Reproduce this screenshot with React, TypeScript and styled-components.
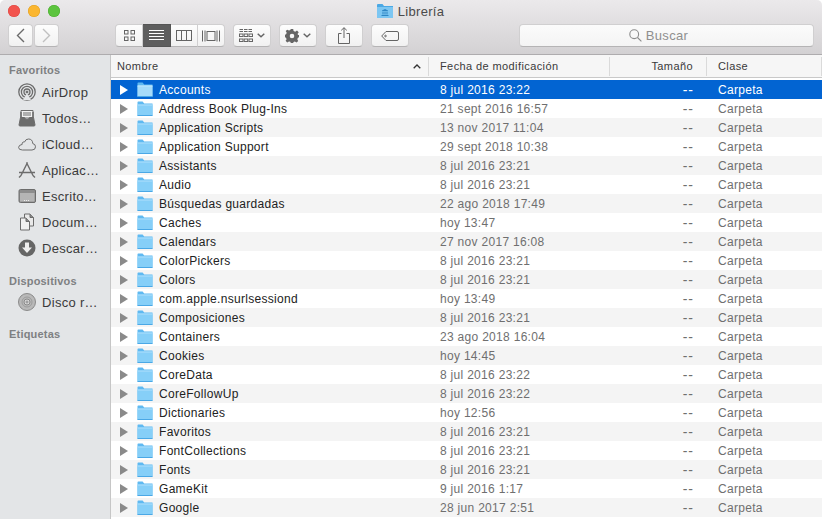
import React from 'react';
import styled, { createGlobalStyle } from 'styled-components';

const Global = createGlobalStyle`
  html, body {
    margin: 0;
    background: #fff;
  }
  body {
    font-family: "Liberation Sans", Arial, sans-serif;
  }
`;

const Window = styled.div`
  width: 822px;
  height: 519px;
  overflow: hidden;
  display: flex;
  flex-direction: column;
  border-radius: 5px 5px 0 0;
  background: #fff;
`;

const Chrome = styled.header`
  height: 54px;
  flex: none;
  background: linear-gradient(#ebe9eb, #d3d1d3);
  border-bottom: 1px solid #aeacae;
`;

const TitleBar = styled.div`
  height: 22px;
  display: grid;
  grid-template-columns: 1fr auto 1fr;
  align-items: center;
  padding: 0 8px 0 8px;
`;

const Lights = styled.div`
  display: flex;
  gap: 8px;
`;

const Light = styled.span<{ $c: string; $b: string }>`
  width: 12px;
  height: 12px;
  border-radius: 50%;
  background: ${(p) => p.$c};
  box-shadow: inset 0 0 0 0.5px ${(p) => p.$b};
`;

const Title = styled.div`
  display: flex;
  align-items: center;
  gap: 5px;
  font-size: 13px;
  letter-spacing: 0.3px;
  color: #4a4a4a;
  margin-right: 1px;
`;

const Toolbar = styled.div`
  height: 23px;
  margin-top: 2px;
  display: flex;
  padding: 0 8px;
`;

const Nav = styled.div`
  display: flex;
  gap: 1px;
  margin-right: 56px;
`;

const Segments = styled.div`
  display: flex;
  margin-right: 8px;
`;

const Btn = styled.button<{ $w: number; $on?: boolean; $seg?: 'l' | 'm' | 'r' }>`
  width: ${(p) => p.$w}px;
  height: 23px;
  padding: 0;
  display: flex;
  align-items: center;
  justify-content: center;
  gap: 4px;
  color: ${(p) => (p.$on ? '#fff' : '#646464')};
  background: ${(p) => (p.$on ? '#5e5e5e' : 'linear-gradient(#fdfdfd, #f1f1f1)')};
  border: 1px solid ${(p) => (p.$on ? '#555' : '#d0cfd0')};
  border-bottom-color: ${(p) => (p.$on ? '#555' : '#b5b4b5')};
  border-left-width: ${(p) => (p.$seg === 'm' || p.$seg === 'r' ? 0 : 1)}px;
  border-radius: ${(p) =>
    p.$seg === 'l' ? '4px 0 0 4px' : p.$seg === 'm' ? '0' : p.$seg === 'r' ? '0 4px 4px 0' : '4px'};
`;

const Gap = styled(Btn)`
  margin-right: 8px;
`;

const Search = styled.div`
  margin-left: auto;
  width: 295px;
  height: 23px;
  box-sizing: border-box;
  display: flex;
  align-items: center;
  justify-content: center;
  gap: 4px;
  padding-right: 16px;
  font-size: 13px;
  letter-spacing: 0.3px;
  color: #8f8f8f;
  background: linear-gradient(#fbfbfb, #f4f4f4);
  border: 1px solid #d0cfd0;
  border-bottom-color: #b5b4b5;
  border-radius: 4px;
`;

const Body = styled.div`
  flex: 1;
  min-height: 0;
  display: flex;
`;

const Sidebar = styled.aside`
  width: 110px;
  flex: none;
  box-sizing: content-box;
  background: #e3e5e7;
  border-right: 1px solid #c6c6c6;
  padding-top: 8px;
`;

const SideLabel = styled.div`
  height: 15px;
  line-height: 15px;
  padding-left: 9px;
  font-size: 11px;
  font-weight: bold;
  letter-spacing: 0.2px;
  color: #7e8082;
`;

const SideItem = styled.div`
  height: 26px;
  display: flex;
  align-items: center;
  gap: 6px;
  padding-left: 18px;
  font-size: 13px;
  letter-spacing: 0.3px;
  color: #3a3a3a;
  white-space: nowrap;
`;

const SideGroup = styled.div<{ $top: number; $bottom: number }>`
  margin-top: ${(p) => p.$top}px;
  margin-bottom: ${(p) => p.$bottom}px;
`;

const Content = styled.main`
  flex: 1;
  min-width: 0;
  display: flex;
  flex-direction: column;
`;

const Columns = '318px 181px 97px 1fr';

const Header = styled.div`
  height: 22px;
  flex: none;
  display: grid;
  grid-template-columns: ${Columns};
  align-items: center;
  background: #f6f6f6;
  border-bottom: 1px solid #c9c9c9;
  font-size: 11px;
  letter-spacing: 0.4px;
  color: #3a3a3a;
  margin-bottom: 2px;
`;

const HeadCell = styled.div<{ $right?: boolean; $pad: number }>`
  height: 19px;
  line-height: 19px;
  box-sizing: border-box;
  display: flex;
  align-items: center;
  justify-content: ${(p) => (p.$right ? 'flex-end' : 'space-between')};
  padding: ${(p) => (p.$right ? `0 13px 0 0` : `0 7px 0 ${p.$pad}px`)};
  border-right: 1px solid #dadada;
`;

const Row = styled.div<{ $bg: string; $sel: boolean }>`
  height: 19px;
  display: grid;
  grid-template-columns: ${Columns};
  align-items: center;
  background: ${(p) => p.$bg};
  font-size: 12px;
  letter-spacing: 0.3px;
  color: ${(p) => (p.$sel ? '#fff' : '#6f6f6f')};
`;

const NameCell = styled.div<{ $sel: boolean }>`
  display: flex;
  align-items: center;
  padding-left: 9px;
  color: ${(p) => (p.$sel ? '#fff' : '#222')};
  white-space: nowrap;
`;

const Disclosure = styled.svg`
  width: 8px;
  height: 10px;
  margin-right: 9px;
`;

const FolderIcon = styled.svg`
  width: 16px;
  height: 15px;
  margin-right: 6px;
`;

const DateCell = styled.div`
  padding-left: 11px;
`;

const SizeCell = styled.div`
  text-align: right;
  padding-right: 13px;
  font-size: 14px;
  letter-spacing: 1px;
`;

const KindCell = styled.div`
  padding-left: 11px;
`;

const rows: [string, string][] = [
  ['Accounts', '8 jul 2016 23:22'],
  ['Address Book Plug-Ins', '21 sept 2016 16:57'],
  ['Application Scripts', '13 nov 2017 11:04'],
  ['Application Support', '29 sept 2018 10:38'],
  ['Assistants', '8 jul 2016 23:21'],
  ['Audio', '8 jul 2016 23:21'],
  ['Búsquedas guardadas', '22 ago 2018 17:49'],
  ['Caches', 'hoy 13:47'],
  ['Calendars', '27 nov 2017 16:08'],
  ['ColorPickers', '8 jul 2016 23:21'],
  ['Colors', '8 jul 2016 23:21'],
  ['com.apple.nsurlsessiond', 'hoy 13:49'],
  ['Composiciones', '8 jul 2016 23:21'],
  ['Containers', '23 ago 2018 16:04'],
  ['Cookies', 'hoy 14:45'],
  ['CoreData', '8 jul 2016 23:22'],
  ['CoreFollowUp', '8 jul 2016 23:22'],
  ['Dictionaries', 'hoy 12:56'],
  ['Favoritos', '8 jul 2016 23:21'],
  ['FontCollections', '8 jul 2016 23:21'],
  ['Fonts', '8 jul 2016 23:21'],
  ['GameKit', '9 jul 2016 1:17'],
  ['Google', '28 jun 2017 2:51'],
];

const Folder = ({ sel }: { sel: boolean }) => (
  <FolderIcon viewBox="0 0 16 15">
    <path d="M0.5 14.5V1.2Q0.5 0.5 1.2 0.5H5.6L7.2 2.5H15.5V14.5Z" fill={sel ? '#5cb6f0' : '#5fb9f1'} />
    <rect x="0.5" y="3.5" width="15" height="11" rx="0.5" fill={sel ? '#a5dbfa' : '#86cff8'} />
    <rect x="0.5" y="3.5" width="15" height="1" fill={sel ? '#c4e8fc' : '#b0e0fb'} />
    <rect x="0.5" y="14" width="15" height="1" fill="#4aa8e6" />
  </FolderIcon>
);

const Triangle = ({ sel }: { sel: boolean }) => (
  <Disclosure viewBox="0 0 8 10">
    <path d="M0 0L8 5L0 10Z" fill={sel ? '#fff' : '#8a8a8a'} />
  </Disclosure>
);

const Ico = ({ w, h, children }: { w: number; h: number; children: React.ReactNode }) => (
  <svg width={w} height={h} viewBox={`0 0 ${w} ${h}`} fill="none" stroke="currentColor" strokeWidth="1">
    {children}
  </svg>
);

const Chevron = () => (
  <Ico w={8} h={5}>
    <path d="M0.7 0.7L4 3.8L7.3 0.7" strokeWidth="1.4" />
  </Ico>
);

const S = ({ children }: { children: React.ReactNode }) => (
  <svg width="18" height="18" viewBox="0 0 18 18" fill="none" stroke="#6c6c6c" strokeWidth="1" style={{ flex: 'none' }}>
    {children}
  </svg>
);

const sideIcons: Record<string, React.ReactNode> = {
  air: (
    <S>
      <circle cx="9" cy="9" r="8.2" strokeWidth="1.3" />
      <circle cx="9" cy="9" r="5.6" strokeWidth="1.3" />
      <circle cx="9" cy="9" r="3" strokeWidth="1.3" />
      <circle cx="9" cy="9" r="1" fill="#6c6c6c" />
      <path d="M5 17L9 10L13 17Z" fill="#e3e5e7" stroke="none" />
    </S>
  ),
  all: (
    <S>
      <path d="M3 1.5H15V9H3Z" fill="#f2f2f2" />
      <path d="M5 4H13M5 6H13" />
      <path d="M2.5 8.5H6.5Q7 10.5 9 10.5Q11 10.5 11.5 8.5H15.5L17 16Q17 17 16 17H2Q1 17 1 16Z" fill="#6c6c6c" />
      <path d="M3 3V9M15 3V9" strokeWidth="1.5" />
    </S>
  ),
  cloud: (
    <S>
      <path d="M4.5 15H14Q17.5 15 17.5 11.8Q17.5 9 14.8 8.6Q14.5 4 10.5 4Q7.5 4 6.5 7Q5 6.4 4.3 8Q4 9 4.2 9.4Q0.6 10 0.6 12.4Q0.6 15 4.5 15Z" />
    </S>
  ),
  apps: (
    <S>
      <path d="M9.5 1.5L3 14.5M8.5 1.5L15 14.5M1 11.5H17M1 16.5L3 14.5M17 16.5L15 14.5" strokeWidth="1.4" />
    </S>
  ),
  desk: (
    <S>
      <rect x="1" y="2.5" width="16.5" height="13" rx="1.5" fill="#8d8d8d" stroke="#6c6c6c" />
      <rect x="2" y="6" width="14.5" height="8.5" fill="#b5b5b5" stroke="none" />
      <path d="M6 13.5H12" stroke="#eee" strokeDasharray="1 1" />
    </S>
  ),
  docs: (
    <S>
      <path d="M6.5 1H12L15.5 4.5V13H6.5Z" fill="#e9e9e9" />
      <path d="M12 1V4.5H15.5" fill="#8a8a8a" />
      <path d="M2.5 5H8L11.5 8.5V17H2.5Z" fill="#f1f1f1" />
      <path d="M8 5V8.5H11.5" fill="#8a8a8a" />
    </S>
  ),
  down: (
    <S>
      <circle cx="9" cy="9" r="8.5" fill="#666" stroke="none" />
      <path d="M7 3.5H11V8.5H14L9 14L4 8.5H7Z" fill="#eee" stroke="none" />
    </S>
  ),
  disc: (
    <S>
      <circle cx="9" cy="9" r="8.5" fill="#b9b9b9" stroke="#8a8a8a" />
      <circle cx="9" cy="9" r="5" stroke="#9c9c9c" />
      <circle cx="9" cy="9" r="3" fill="#d8d8d8" stroke="#8a8a8a" />
      <circle cx="9" cy="9" r="1" fill="#e3e5e7" stroke="#8a8a8a" />
    </S>
  ),
};

const favorites: [keyof typeof sideIcons, string][] = [
  ['air', 'AirDrop'],
  ['all', 'Todos…'],
  ['cloud', 'iCloud…'],
  ['apps', 'Aplicac…'],
  ['desk', 'Escrito…'],
  ['docs', 'Docum…'],
  ['down', 'Descar…'],
];

export default function App() {
  return (
    <Window>
      <Global />
      <Chrome>
        <TitleBar>
          <Lights>
            <Light $c="#f2544e" $b="#dd4540" />
            <Light $c="#fbb630" $b="#e09e20" />
            <Light $c="#5cc43e" $b="#4aab2f" />
          </Lights>
          <Title>
            <svg width="16" height="14" viewBox="0 0 16 14">
              <path d="M0 14V1Q0 0 1 0H5.5L7 2H16V14Z" fill="#4ba8e4" />
              <rect x="0" y="3" width="16" height="11" fill="#7cc6f2" />
              <path d="M5 6.5L8 5L11 6.5V7H5ZM5.5 7.5H6.5V10.5H5.5ZM7.5 7.5H8.5V10.5H7.5ZM9.5 7.5H10.5V10.5H9.5ZM4.5 11H11.5V12H4.5Z" fill="#2e86c4" />
            </svg>
            Librería
          </Title>
        </TitleBar>
        <Toolbar>
          <Nav>
            <Btn $w={25}>
              <Ico w={9} h={15}>
                <path d="M8 1L1.5 7.5L8 14" strokeWidth="1.4" stroke="#6a6a6a" />
              </Ico>
            </Btn>
            <Btn $w={25}>
              <Ico w={9} h={15}>
                <path d="M1 1L7.5 7.5L1 14" strokeWidth="1.4" stroke="#c0c0c0" />
              </Ico>
            </Btn>
          </Nav>
          <Segments>
            <Btn $w={28} $seg="l">
              <Ico w={11} h={11}>
                <rect x="0.5" y="0.5" width="3.5" height="3.5" />
                <rect x="7" y="0.5" width="3.5" height="3.5" />
                <rect x="0.5" y="7" width="3.5" height="3.5" />
                <rect x="7" y="7" width="3.5" height="3.5" />
              </Ico>
            </Btn>
            <Btn $w={28} $seg="m" $on>
              <Ico w={15} h={11}>
                <path d="M0 0.5H15M0 3.5H15M0 6.5H15M0 9.5H15" />
              </Ico>
            </Btn>
            <Btn $w={27} $seg="m">
              <Ico w={16} h={11}>
                <rect x="0.5" y="0.5" width="15" height="10" />
                <path d="M5.5 0.5V10.5M10.5 0.5V10.5" />
              </Ico>
            </Btn>
            <Btn $w={27} $seg="r">
              <Ico w={18} h={12}>
                <rect x="5" y="1.5" width="8" height="9" />
                <path d="M0.5 0.5V11.5M3 0.5V11.5M15 0.5V11.5M17.5 0.5V11.5" />
              </Ico>
            </Btn>
          </Segments>
          <Gap $w={38}>
            <Ico w={14} h={13}>
              <path d="M0.5 0.5H13.5M0.5 2.5H13.5" strokeDasharray="3.5 1" />
              <rect x="0.5" y="5" width="3.5" height="2.5" />
              <rect x="5.2" y="5" width="3.5" height="2.5" />
              <rect x="10" y="5" width="3.5" height="2.5" />
              <rect x="0.5" y="10" width="3.5" height="2.5" />
              <rect x="5.2" y="10" width="3.5" height="2.5" />
              <rect x="10" y="10" width="3.5" height="2.5" />
            </Ico>
            <Chevron />
          </Gap>
          <Gap $w={38}>
            <svg width="14" height="14" viewBox="0 0 14 14">
              <path
                d="M5.8 0H8.2L8.6 2L10.2 2.7L12 1.6L13.7 3.3L12.5 5L13.2 6L14 6V8.2L12.9 8.8L12.3 10.3L13.2 12L11.6 13.6L9.8 12.5L8.5 13L8.2 14H5.8L5.3 12.8L4 12.4L2.2 13.5L0.6 11.8L1.6 10.2L1 8.7L0 8.2V5.8L1.1 5.2L1.7 3.8L0.7 2.1L2.2 0.7L4 1.6L5.3 1.1Z M7 4.7A2.3 2.3 0 1 0 7 9.3A2.3 2.3 0 1 0 7 4.7Z"
                fill="#666"
                fillRule="evenodd"
              />
            </svg>
            <Chevron />
          </Gap>
          <Gap $w={38}>
            <Ico w={12} h={17}>
              <path d="M3.5 6.5H0.5V16.5H11.5V6.5H8.5" />
              <path d="M6 11V0.8M3.2 3.4L6 0.7L8.8 3.4" />
            </Ico>
          </Gap>
          <Gap $w={38}>
            <Ico w={18} h={10}>
              <path d="M5 0.5H16Q17.5 0.5 17.5 2V8Q17.5 9.5 16 9.5H5L0.7 5Z" />
              <circle cx="4.5" cy="5" r="0.8" />
            </Ico>
          </Gap>
          <Search>
            <svg width="13" height="13" viewBox="0 0 13 13" fill="none" stroke="#8c8c8c" strokeWidth="1.1">
              <circle cx="5.2" cy="5.2" r="4.4" />
              <path d="M8.5 8.5L12.4 12.4" />
            </svg>
            Buscar
          </Search>
        </Toolbar>
      </Chrome>
      <Body>
        <Sidebar>
          <SideLabel>Favoritos</SideLabel>
          <SideGroup $top={1} $bottom={13}>
            {favorites.map(([k, t]) => (
              <SideItem key={t}>
                {sideIcons[k]}
                {t}
              </SideItem>
            ))}
          </SideGroup>
          <SideLabel>Dispositivos</SideLabel>
          <SideGroup $top={0} $bottom={12}>
            <SideItem>
              {sideIcons.disc}
              Disco r…
            </SideItem>
          </SideGroup>
          <SideLabel>Etiquetas</SideLabel>
        </Sidebar>
        <Content>
          <Header>
            <HeadCell $pad={6}>
              Nombre
              <svg width="8" height="5" viewBox="0 0 8 5" fill="none" stroke="#333" strokeWidth="1.3">
                <path d="M0.7 4.3L4 1L7.3 4.3" />
              </svg>
            </HeadCell>
            <HeadCell $pad={11}>Fecha de modificación</HeadCell>
            <HeadCell $pad={0} $right>
              Tamaño
            </HeadCell>
            <HeadCell $pad={11}>Clase</HeadCell>
          </Header>
          {rows.map(([name, date], i) => {
            const sel = i === 0;
            const bg = sel ? '#0264d2' : i % 2 ? '#fff' : '#f4f4f4';
            return (
              <Row key={name} $bg={bg} $sel={sel}>
                <NameCell $sel={sel}>
                  <Triangle sel={sel} />
                  <Folder sel={sel} />
                  {name}
                </NameCell>
                <DateCell>{date}</DateCell>
                <SizeCell>--</SizeCell>
                <KindCell>Carpeta</KindCell>
              </Row>
            );
          })}
        </Content>
      </Body>
    </Window>
  );
}
